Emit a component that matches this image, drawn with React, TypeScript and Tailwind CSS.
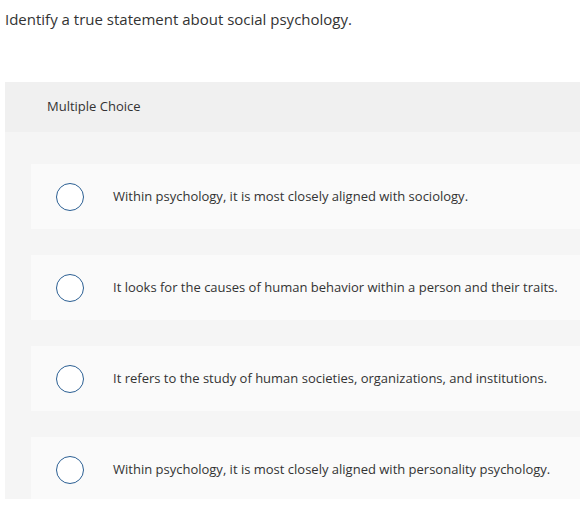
const options = [
  "Within psychology, it is most closely aligned with sociology.",
  "It looks for the causes of human behavior within a person and their traits.",
  "It refers to the study of human societies, organizations, and institutions.",
  "Within psychology, it is most closely aligned with personality psychology.",
];

export default function App() {
  return (
    <div
      className="w-[580px] h-[514px] bg-white text-[#333] overflow-hidden"
      style={{ fontFamily: "'Open Sans', sans-serif" }}
    >
      <p className="pl-[5px] pt-[9px] text-[15px] leading-[20px]">
        Identify a true statement about social psychology.
      </p>

      <div className="ml-[5px] mt-[53px] h-[417px] bg-[#f5f5f5] overflow-hidden">
        <div className="h-[50px] bg-[#f0f0f0] flex items-center pl-[42px] text-[13px]">
          Multiple Choice
        </div>

        <div className="pt-[32px] pl-[26px] flex flex-col gap-[26px]">
          {options.map((text) => (
            <label
              key={text}
              className="h-[65px] shrink-0 bg-[#fafafa] flex items-center cursor-pointer"
            >
              <span className="ml-[25px] w-[28px] h-[28px] rounded-full border-[1.5px] border-[#2b5f93] bg-white shrink-0" />
              <span className="ml-[29px] text-[13px]">{text}</span>
            </label>
          ))}
        </div>
      </div>
    </div>
  );
}
